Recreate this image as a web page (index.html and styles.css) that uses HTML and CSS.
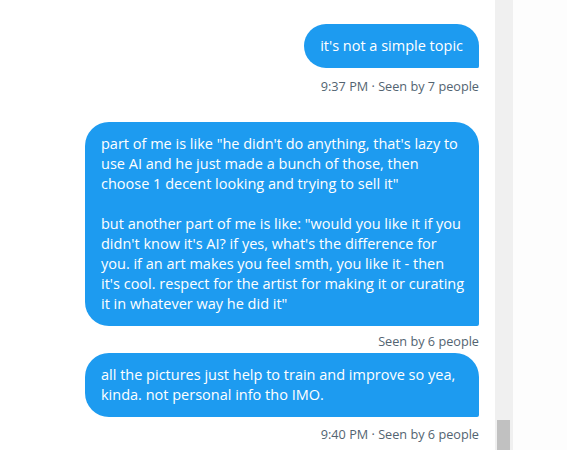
FILE: index.html
```html
<!DOCTYPE html>
<html>
<head>
<meta charset="utf-8">
<link rel="stylesheet" href="styles.css">
</head>
<body>
<div class="screen">
  <main class="conversation">
    <div class="message">
      <div class="bubble">it's not a simple topic</div>
      <div class="meta meta-group">9:37 PM · Seen by 7 people</div>
    </div>
    <div class="message">
      <div class="bubble bubble-wide">part of me is like "he didn't do anything, that's lazy to<br>use AI and he just made a bunch of those, then<br>choose 1 decent looking and trying to sell it"<br><br>but another part of me is like: "would you like it if you<br>didn't know it's AI? if yes, what's the difference for<br>you. if an art makes you feel smth, you like it - then<br>it's cool. respect for the artist for making it or curating<br>it in whatever way he did it"</div>
      <div class="meta meta-inline">Seen by 6 people</div>
    </div>
    <div class="message">
      <div class="bubble bubble-wide">all the pictures just help to train and improve so yea,<br>kinda. not personal info tho IMO.</div>
      <div class="meta meta-last">9:40 PM · Seen by 6 people</div>
    </div>
  </main>
  <div class="scrollbar">
    <div class="thumb"></div>
  </div>
  <div class="side"></div>
</div>
</body>
</html>
```

FILE: styles.css
```css
html, body {
  margin: 0;
  padding: 0;
  background: #ffffff;
}

.screen {
  display: flex;
  width: 567px;
  height: 450px;
  overflow: hidden;
  font-family: "Open Sans", "Noto Sans", sans-serif;
}

.conversation {
  flex: 1;
  display: flex;
  flex-direction: column;
  align-items: flex-end;
  padding: 24px 16px 0 0;
  box-sizing: border-box;
  min-width: 0;
}

.message {
  display: flex;
  flex-direction: column;
  align-items: flex-end;
}

.bubble {
  background: #1d9bf0;
  color: #ffffff;
  font-size: 14.5px;
  line-height: 20px;
  padding: 12px 16px;
  border-radius: 24px 24px 2px 24px;
  white-space: nowrap;
}

.bubble-wide {
  width: 394px;
  box-sizing: border-box;
}

.meta {
  color: #536471;
  font-size: 12.7px;
  line-height: 16px;
  white-space: nowrap;
}

.meta-group {
  padding-top: 10px;
  margin-bottom: 28px;
}

.meta-inline {
  padding-top: 7px;
  margin-bottom: 4px;
}

.meta-last {
  padding-top: 9px;
}

.scrollbar {
  width: 18px;
  flex: none;
  background: #f0f0f0;
  display: flex;
  flex-direction: column;
  justify-content: flex-end;
}

.thumb {
  height: 30px;
  margin: 0 3px 0 2px;
  background: #c1c1c1;
}

.side {
  width: 54px;
  flex: none;
  background: #fdfdfd;
}
```
